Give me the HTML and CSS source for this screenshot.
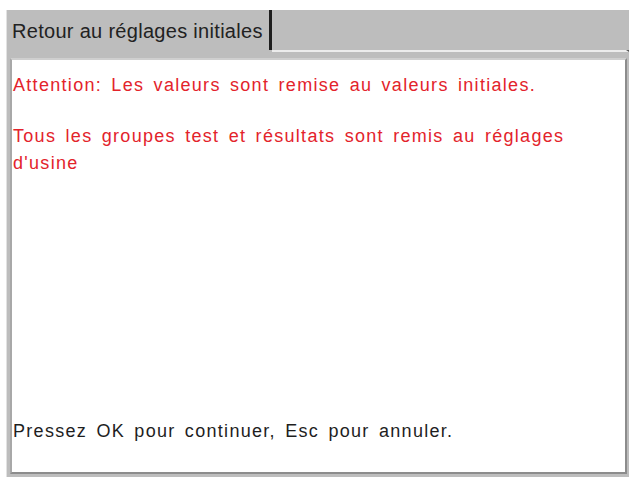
FILE: index.html
```html
<!DOCTYPE html>
<html lang="fr">
<head>
  <meta charset="UTF-8">
  <title>Retour au réglages initiales</title>
  <link rel="stylesheet" href="styles.css">
</head>
<body>
  <div class="window">
    <div class="tabs">
      <div class="tab">Retour au réglages initiales</div>
      <div class="tab-rest"></div>
    </div>
    <div class="panel">
      <p class="warn">Attention: Les valeurs sont remise au valeurs initiales.</p>
      <p class="warn">Tous les groupes test et résultats sont remis au réglages d'usine</p>
      <p class="hint">Pressez OK pour continuer, Esc pour annuler.</p>
    </div>
  </div>
</body>
</html>
```

FILE: styles.css
```css
* { margin: 0; padding: 0; box-sizing: border-box; }
body { background: #fff; font-family: 'Liberation Sans', Arial, sans-serif; }
.window { margin: 10px 0 0 6px; width: 623px; height: 467px; background: #bdbdbd; border-left: 1px solid #e2e2e2; display: flex; flex-direction: column; }
.tabs { display: flex; height: 40px; }
.tab { padding: 3px 6px 0 5px; font-size: 20px; letter-spacing: 0.3px; line-height: 37px; color: #222; border-right: 3px solid #1e1e1e; }
.tab-rest { flex: 1; border-bottom: 2px solid #ececec; border-right: 3px solid #555; margin-top: 40px; height: 0; }
.panel { flex: 1; margin: 8px 2px 3px 3px; background: #fff; border: 2px solid #8c8c8c; border-left-color: #a8a8a8; border-top-color: #cfcfcf; padding: 12px 2px 0 1px; display: flex; flex-direction: column; }
.warn { color: #e3232b; font-size: 18px; letter-spacing: 1.3px; word-spacing: 3px; line-height: 27px; margin-bottom: 24px; }
.hint { margin-top: auto; margin-bottom: 30px; font-size: 18px; letter-spacing: 1.3px; word-spacing: 3px; color: #1e1e1e; }
```
